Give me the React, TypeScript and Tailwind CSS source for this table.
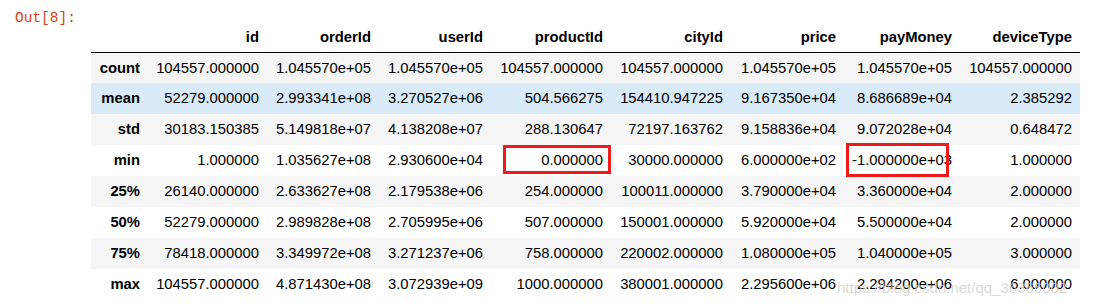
import React from 'react';

const columns = ['id', 'orderId', 'userId', 'productId', 'cityId', 'price', 'payMoney', 'deviceType'];
const widths = ['w-[119px]', 'w-[112px]', 'w-[112px]', 'w-[120px]', 'w-[120px]', 'w-[113px]', 'w-[116px]', 'w-[120px]'];

const rows: [string, string[]][] = [
  ['count', ['104557.000000', '1.045570e+05', '1.045570e+05', '104557.000000', '104557.000000', '1.045570e+05', '1.045570e+05', '104557.000000']],
  ['mean', ['52279.000000', '2.993341e+08', '3.270527e+06', '504.566275', '154410.947225', '9.167350e+04', '8.686689e+04', '2.385292']],
  ['std', ['30183.150385', '5.149818e+07', '4.138208e+07', '288.130647', '72197.163762', '9.158836e+04', '9.072028e+04', '0.648472']],
  ['min', ['1.000000', '1.035627e+08', '2.930600e+04', '0.000000', '30000.000000', '6.000000e+02', '-1.000000e+03', '1.000000']],
  ['25%', ['26140.000000', '2.633627e+08', '2.179538e+06', '254.000000', '100011.000000', '3.790000e+04', '3.360000e+04', '2.000000']],
  ['50%', ['52279.000000', '2.989828e+08', '2.705995e+06', '507.000000', '150001.000000', '5.920000e+04', '5.500000e+04', '2.000000']],
  ['75%', ['78418.000000', '3.349972e+08', '3.271237e+06', '758.000000', '220002.000000', '1.080000e+05', '1.040000e+05', '3.000000']],
  ['max', ['104557.000000', '4.871430e+08', '3.072939e+09', '1000.000000', '380001.000000', '2.295600e+06', '2.294200e+06', '6.000000']],
];

function rowBg(i: number) {
  if (i === 1) return 'bg-[#d9eaf8]';
  return i % 2 === 0 ? 'bg-[#f5f5f5]' : 'bg-white';
}

const App: React.FC = () => {
  return (
    <div className="relative w-[1094px] h-[307px] bg-white overflow-hidden font-['Liberation_Sans',Arial,sans-serif] text-[14.8px] text-black">
      <div className="flex pl-[15px] pt-[8px]">
        <div className="w-[76px] shrink-0 font-['Liberation_Mono',monospace] text-[14.5px] text-[#d84315] leading-5">
          Out[8]:
        </div>
        <table className="border-collapse table-fixed mt-[14px]">
          <thead>
            <tr className="h-[30px] border-b border-black">
              <th className="w-[57px]"></th>
              {columns.map((c, i) => (
                <th key={c} className={`${widths[i]} pr-2 text-right font-bold align-middle`}>
                  {c}
                </th>
              ))}
            </tr>
          </thead>
          <tbody>
            {rows.map(([label, vals], i) => (
              <tr key={label} className={`h-[31px] ${rowBg(i)}`}>
                <th className="pr-2 text-right font-bold">{label}</th>
                {vals.map((v, j) => (
                  <td key={j} className="relative pr-2 text-right whitespace-nowrap">
                    {v}
                    {label === 'min' && j === 3 && (
                      <span className="absolute left-[12px] right-0 top-0 bottom-[2px] border-[3px] border-[#f01a1a]"></span>
                    )}
                    {label === 'min' && j === 6 && (
                      <span className="absolute left-[2px] right-[11px] top-[-2px] bottom-[-1px] border-[3px] border-[#f01a1a]"></span>
                    )}
                  </td>
                ))}
              </tr>
            ))}
          </tbody>
        </table>
      </div>
      <div className="absolute left-[837px] top-[277px] text-[15px] text-[#cccccc]/75 pointer-events-none">
        https://blog.csdn.net/qq_36366002
      </div>
    </div>
  );
};

export default App;
